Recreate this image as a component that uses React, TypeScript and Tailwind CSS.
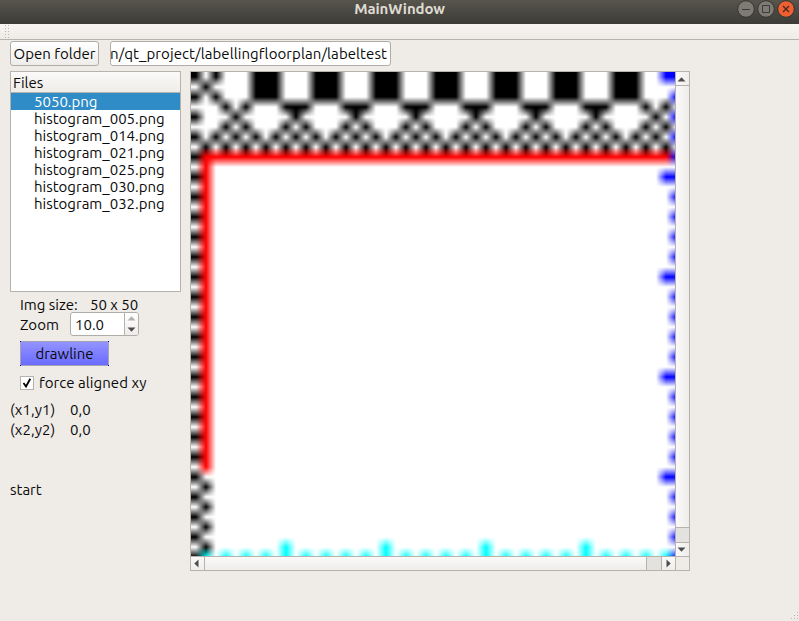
import { useLayoutEffect, useRef } from "react";
import type { ReactNode } from "react";

const SIZE = 50;
const SCALE = 10;
const VIEW = 484;

type RGB = [number, number, number];
const BLACK: RGB = [0, 0, 0];
const RED: RGB = [255, 0, 0];
const BLUE: RGB = [0, 0, 255];
const CYAN: RGB = [0, 255, 255];

function buildPlan(): RGB[][] {
  const g: RGB[][] = Array.from({ length: SIZE }, () =>
    Array.from({ length: SIZE }, () => [255, 255, 255] as RGB)
  );
  const put = (y: number, xs: number[], c: RGB) => xs.forEach((x) => (g[y][x] = c));

  for (let y = 0; y < SIZE; y += 2) put(y, [0], BLACK);
  put(0, [2], BLACK);
  put(1, [1], BLACK);
  put(2, [2], BLACK);
  for (let b = 6; b <= 42; b += 6) {
    for (let y = 0; y < 3; y++) put(y, [b, b + 1, b + 2], BLACK);
  }
  put(3, [3, 5, 45, 47], BLACK);
  for (let t = 9; t <= 39; t += 6) put(3, [t, t + 1, t + 2], BLACK);
  for (let x = 4; x <= 46; x += 6) put(4, [x], BLACK);
  for (let x = 3; x <= 45; x += 6) put(5, [x, x + 2], BLACK);
  for (let x = 2; x <= 46; x += 2) put(6, [x], BLACK);
  for (let x = 1; x <= 47; x += 2) put(7, [x], BLACK);

  for (let x = 1; x <= 47; x++) put(8, [x], RED);
  for (let y = 8; y <= 39; y++) put(y, [1], RED);
  for (let y = 41; y <= 47; y += 2) put(y, [1], BLACK);

  for (let x = 1; x <= 47; x += 2) put(48, [x], CYAN);
  for (let x = 9; x <= 39; x += 10) put(47, [x], CYAN);

  for (let y = 0; y <= 48; y += 2) put(y, [48], BLUE);
  for (let y = 0; y <= 40; y += 10) put(y, [47], BLUE);
  return g;
}

function FloorPlan() {
  const ref = useRef<HTMLCanvasElement>(null);
  useLayoutEffect(() => {
    const ctx = ref.current?.getContext("2d");
    if (!ctx) return;
    const g = buildPlan();
    const img = ctx.createImageData(VIEW, VIEW);
    const clamp = (v: number) => Math.max(0, Math.min(SIZE - 1, v));
    for (let y = 0; y < VIEW; y++) {
      const sy = (y + 0.5) / SCALE - 0.5;
      const y0 = Math.floor(sy);
      const fy = sy - y0;
      for (let x = 0; x < VIEW; x++) {
        const sx = (x + 0.5) / SCALE - 0.5;
        const x0 = Math.floor(sx);
        const fx = sx - x0;
        const a = g[clamp(y0)][clamp(x0)];
        const b = g[clamp(y0)][clamp(x0 + 1)];
        const c = g[clamp(y0 + 1)][clamp(x0)];
        const d = g[clamp(y0 + 1)][clamp(x0 + 1)];
        const o = (y * VIEW + x) * 4;
        for (let k = 0; k < 3; k++) {
          img.data[o + k] =
            (a[k] * (1 - fx) + b[k] * fx) * (1 - fy) + (c[k] * (1 - fx) + d[k] * fx) * fy;
        }
        img.data[o + 3] = 255;
      }
    }
    ctx.putImageData(img, 0, 0);
  }, []);
  return <canvas ref={ref} width={VIEW} height={VIEW} className="block h-[484px] w-[484px]" />;
}

const files = [
  "5050.png",
  "histogram_005.png",
  "histogram_014.png",
  "histogram_021.png",
  "histogram_025.png",
  "histogram_030.png",
  "histogram_032.png",
];

function WindowButton({ close, children }: { close?: boolean; children: ReactNode }) {
  return (
    <svg width="18" height="18" viewBox="0 0 18 18">
      <circle cx="9" cy="9" r="8.3" fill={close ? "#ee5f32" : "#7d7b74"} stroke="#35342f" strokeWidth="1" />
      {children}
    </svg>
  );
}

function Arrow({ d, color = "#4c4c4c" }: { d: string; color?: string }) {
  return (
    <svg width="9" height="9" viewBox="0 0 9 9" fill={color}>
      <path d={d} />
    </svg>
  );
}
const UP = "M4.5 2.3 L8.5 6.5 H.5Z";
const DOWN = "M4.5 6.7 L8.5 2.5 H.5Z";
const LEFT = "M2.3 4.5 L6.5 .5 V8.5Z";
const RIGHT = "M6.7 4.5 L2.5 .5 V8.5Z";

function TitleBar() {
  return (
    <div className="flex h-6 shrink-0 bg-linear-to-b from-[#57554c] to-[#3c3b37]">
      <div className="w-[62px]" />
      <div className="flex-1 text-center text-[15px] leading-[18px] font-bold tracking-[-0.1px] text-[#dfdbd2]">MainWindow</div>
      <div className="flex w-[62px] gap-[2px]">
        <WindowButton>
          <path d="M5 9.5h8" stroke="#3c3b37" />
        </WindowButton>
        <WindowButton>
          <path d="M5.5 5.5h7v7h-7z" fill="none" stroke="#3c3b37" />
        </WindowButton>
        <WindowButton close>
          <path d="M6 6l6 6M12 6l-6 6" stroke="#4a2a1c" strokeWidth="1.4" />
        </WindowButton>
      </div>
    </div>
  );
}

function FileTree() {
  return (
    <div className="h-[221px] w-[171px] border border-[#b6b2ad] bg-white">
      <div className="h-[21px] border-b border-[#b6b2ad] bg-linear-to-b from-[#fbfaf9] to-[#efece8] pl-[2px] leading-[22px]">
        Files
      </div>
      {files.map((f, i) => (
        <div
          key={f}
          className={
            i === 0
              ? "h-[17px] bg-[#308cc6] pl-[23px] leading-[18px] text-white"
              : "h-[17px] pl-[23px] leading-[18px]"
          }
        >
          {f}
        </div>
      ))}
    </div>
  );
}

function Controls() {
  return (
    <div className="flex flex-col">
      <div className="mt-[5px] flex h-4 pl-[10px] leading-4">
        <span className="w-[70px]">Img size:</span>
        <span>50 x 50</span>
      </div>
      <div className="-mt-px flex h-6 pl-[10px]">
        <span className="w-[50px] leading-[26px]">Zoom</span>
        <div className="flex h-6 w-[69px] rounded-[3px] border border-[#b0aca7] bg-white">
          <span className="flex-1 pl-[4px] leading-[24px]">10.0</span>
          <div className="flex w-[14px] flex-col items-center justify-between rounded-r-[2px] border-l border-[#b6b2ad] bg-linear-to-b from-white to-[#efedea] py-[1px] pr-px">
            <Arrow d={UP} color="#b3b1ae" />
            <Arrow d={DOWN} />
          </div>
        </div>
      </div>
      <div className="mt-[5px] ml-[10px] flex h-[25px] w-[89px] flex-col justify-between bg-[#0000e6]">
        <div className="mx-px h-px bg-[#a5a2b8]" />
        <div className="h-[23px] border-x border-[#a5a2b8] bg-linear-to-b from-[#9393ff] to-[#6a6aff] text-center leading-[24px]">
          drawline
        </div>
        <div className="mx-px h-px bg-[#a5a2b8]" />
      </div>
      <div className="mt-[8px] ml-[10px] flex h-[18px] items-center gap-[5px]">
        <div className="flex h-[14px] w-[14px] items-center justify-center border border-[#b6b2ad] bg-white">
          <svg width="10" height="10" viewBox="0 0 10 10" fill="none" stroke="#000" strokeWidth="1.8">
            <path d="M1.5 5 L4 8.5 L8.3 .8" />
          </svg>
        </div>
        <span className="tracking-[0.05px]">force aligned xy</span>
      </div>
      <div className="mt-[8px] flex h-5 leading-5">
        <span className="w-[60px] tracking-[0.08px]">(x1,y1)</span>
        <span>0,0</span>
      </div>
      <div className="flex h-5 leading-5">
        <span className="w-[60px] tracking-[0.08px]">(x2,y2)</span>
        <span>0,0</span>
      </div>
      <div className="mt-10 h-5 leading-5">start</div>
    </div>
  );
}

function ImageView() {
  return (
    <div className="grid h-[500px] w-[500px] grid-cols-[484px_14px] grid-rows-[484px_14px] border border-[#b6b2ad]">
      <FloorPlan />
      <div className="flex flex-col border-l border-[#b6b2ad] bg-linear-to-r from-[#fbfaf9] to-[#efedea]">
        <div className="flex h-[14px] items-center justify-center border-b border-[#b6b2ad] pt-px pr-[2px]">
          <Arrow d={UP} />
        </div>
        <div className="flex-1" />
        <div className="h-4 border-y border-[#b6b2ad] bg-[#e3e2df]" />
        <div className="flex h-[13px] items-center justify-center pr-[2px]">
          <Arrow d={DOWN} />
        </div>
      </div>
      <div className="flex border-t border-[#b6b2ad] bg-linear-to-b from-[#fbfaf9] to-[#efedea]">
        <div className="flex w-[14px] items-center justify-center border-r border-[#b6b2ad] pr-[2px] pb-px">
          <Arrow d={LEFT} />
        </div>
        <div className="flex-1" />
        <div className="w-4 border-x border-[#b6b2ad] bg-[#e3e2df]" />
        <div className="flex w-[13px] items-center justify-center pb-px">
          <Arrow d={RIGHT} />
        </div>
      </div>
      <div className="border-t border-l border-[#b6b2ad]" />
    </div>
  );
}

function Dots({ w, h, points }: { w: number; h: number; points: number[][] }) {
  return (
    <svg width={w} height={h} fill="#b8b4ae" className="block">
      {points.map(([x, y]) => (
        <rect key={`${x}-${y}`} x={x} y={y} width="1" height="1" />
      ))}
    </svg>
  );
}

export default function App() {
  return (
    <div className="flex h-[621px] w-[799px] flex-col overflow-hidden bg-[#efebe7] font-[Ubuntu,'Noto_Sans',sans-serif] text-[15px] whitespace-nowrap text-[#0a0a0a]">
      <TitleBar />
      <div className="h-4 shrink-0 border-b border-[#b6b2ad] bg-linear-to-b from-[#f7f5f2] to-[#efebe7] pl-[5px]">
        <Dots
          w={4}
          h={15}
          points={[0, 3].flatMap((x) => [1, 4, 7, 10, 13].map((y) => [x, y]))}
        />
      </div>
      <div className="mt-px flex gap-[11px] pl-[10px]">
        <div className="flex h-[25px] w-[89px] justify-center rounded-[3px] border border-[#b0aca7] bg-linear-to-b from-white to-[#efedea] leading-[23px]">
          Open folder
        </div>
        <div className="flex h-[25px] w-[281px] justify-end overflow-hidden rounded-[3px] border border-[#b0aca7] bg-white pr-[3px] leading-[23px]">
          <div className="flex w-[276px] justify-end overflow-hidden">
            <span className="tracking-[0.08px]">n/qt_project/labellingfloorplan/labeltest</span>
          </div>
        </div>
      </div>
      <div className="mt-[5px] flex gap-[9px] pl-[10px]">
        <div className="w-[171px]">
          <FileTree />
          <Controls />
        </div>
        <ImageView />
      </div>
      <div className="mt-auto flex justify-end">
        <Dots w={10} h={11} points={[[8, 2], [5, 5], [8, 5], [2, 8], [5, 8], [8, 8]]} />
      </div>
    </div>
  );
}
